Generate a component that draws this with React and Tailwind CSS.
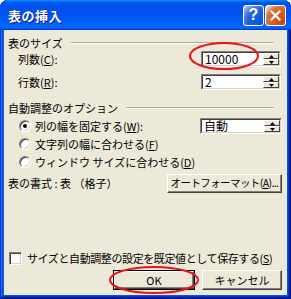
import React from "react";

const FONT = "font-['Noto_Sans_CJK_JP','Noto_Sans_CJK_SC',sans-serif]";

function SpinBtn({ up }) {
  return (
    <div className="flex flex-1 items-center justify-center border border-t-white border-l-white border-b-[#404040] border-r-[#404040] bg-[#ece9d8]">
      <svg width="5" height="3" viewBox="0 0 5 3">
        {up ? <path d="M2.5 0L5 3H0z" fill="#000" /> : <path d="M0 0H5L2.5 3z" fill="#000" />}
      </svg>
    </div>
  );
}

function SpinEdit({ value, w }) {
  return (
    <div className={`flex h-[16px] ${w} border border-t-[#808080] border-l-[#808080] border-b-white border-r-white`}>
      <div className="flex flex-1 border border-t-[#404040] border-l-[#404040] border-b-[#d4d0c8] border-r-[#d4d0c8]">
        <div className="flex flex-1 items-center bg-white pl-[2px] text-[12px] leading-none text-black">{value}</div>
        <div className="flex w-[16px] flex-col">
          <SpinBtn up />
          <SpinBtn />
        </div>
      </div>
    </div>
  );
}

function GroupLabel({ children }) {
  return (
    <div className="flex h-[14px] items-center">
      <span className="whitespace-nowrap text-[11px] leading-none text-black">{children}</span>
      <div className="ml-[8px] mr-[8px] flex-1 border-t border-b border-t-[#aca899] border-b-white" />
    </div>
  );
}

function Radio({ checked }) {
  return (
    <div className="flex h-[12px] w-[12px] items-center justify-center rounded-full border border-t-[#808080] border-l-[#808080] border-b-white border-r-white bg-white shadow-[inset_1px_1px_0_#404040,inset_-1px_-1px_0_#d4d0c8]">
      {checked && <div className="h-[4px] w-[4px] rounded-full bg-black" />}
    </div>
  );
}

function ClassicButton({ children, className = "" }) {
  return (
    <div className={`flex items-center justify-center whitespace-nowrap border border-t-white border-l-white border-b-[#404040] border-r-[#404040] bg-[#ece9d8] shadow-[inset_-1px_-1px_0_#808080] leading-none text-black ${className}`}>
      {children}
    </div>
  );
}

const U = ({ children }) => <span className="underline underline-offset-[1px]">{children}</span>;

export default function App() {
  return (
    <div className={`relative h-[299px] w-[291px] bg-white ${FONT}`}>
      <div className="flex h-[299px] w-[291px] flex-col rounded-t-[8px] bg-[#0855dd] shadow-[inset_-1px_-1px_#00138c,inset_1px_1px_#0831d9,inset_-2px_-2px_#001ea0,inset_2px_2px_#166aee,inset_-3px_-3px_#003bda,inset_3px_3px_#0855dd]">
        {/* Title bar */}
        <div className="flex h-[30px] items-center rounded-t-[8px] bg-[linear-gradient(180deg,#0997ff,#0053ee_8%,#0050ee_40%,#0066ff_88%,#0066ff_93%,#005bff_95%,#003dd7_96%,#003dd7)] pl-[8px] pr-[5px]">
          <span className="text-[13px] font-bold leading-none tracking-[0.5px] text-white [text-shadow:1px_1px_0_#0f1089]">表の挿入</span>
          <div className="ml-auto flex gap-[1px]">
            <div className="flex h-[21px] w-[21px] items-center justify-center rounded-[3px] border border-white bg-[radial-gradient(circle_at_90%_90%,#0054e9_0%,#2263d5_55%,#4479e4_70%,#a3bbec_90%,#ffffff_100%)]">
              <span className="font-['Liberation_Sans',sans-serif] text-[16px] font-bold leading-none text-white">?</span>
            </div>
            <div className="flex h-[21px] w-[21px] items-center justify-center rounded-[3px] border border-white bg-[radial-gradient(circle_at_90%_90%,#cc4600_0%,#dc6527_55%,#cd7546_70%,#ffccb2_90%,#ffffff_100%)]">
              <svg width="11" height="11" viewBox="0 0 11 11">
                <path d="M1.5 1.5L9.5 9.5M9.5 1.5L1.5 9.5" stroke="#fff" strokeWidth="2.2" strokeLinecap="square" />
              </svg>
            </div>
          </div>
        </div>

        {/* Client area */}
        <div className="mx-[4px] flex h-[265px] flex-col bg-[#ece9d8] pl-[4px] pr-[5px] pt-[6px] text-[11px] leading-none text-black">
          <GroupLabel>表のサイズ</GroupLabel>
          <div className="mt-[1px] flex h-[16px] items-center">
            <span className="ml-[10px]">列数(<U>C</U>):</span>
            <div className="ml-auto mr-[1px]">
              <SpinEdit value="10000" w="w-[80px]" />
            </div>
          </div>
          <div className="mt-[7px] flex h-[16px] items-center">
            <span className="ml-[10px]">行数(<U>R</U>):</span>
            <div className="ml-auto mr-[1px]">
              <SpinEdit value="2" w="w-[80px]" />
            </div>
          </div>

          <div className="mt-[11px]">
            <GroupLabel>自動調整のオプション</GroupLabel>
          </div>
          <div className="mt-[2px] flex h-[18px] items-center">
            <div className="ml-[11px]"><Radio checked /></div>
            <span className="ml-[4px]">列の幅を固定する(<U>W</U>):</span>
            <div className="ml-auto">
              <SpinEdit value="自動" w="w-[82px]" />
            </div>
          </div>
          <div className="flex h-[18px] items-center">
            <div className="ml-[11px]"><Radio /></div>
            <span className="ml-[4px]">文字列の幅に合わせる(<U>F</U>)</span>
          </div>
          <div className="flex h-[18px] items-center">
            <div className="ml-[11px]"><Radio /></div>
            <span className="ml-[4px]">ウィンドウ サイズに合わせる(<U>D</U>)</span>
          </div>

          <div className="mt-[3px] flex h-[19px] items-center">
            <span className="whitespace-nowrap">表の書式 : 表 （格子）</span>
            <ClassicButton className="ml-auto h-[19px] w-[115px] text-[10.5px] tracking-[-0.6px]">
              オートフォーマット(<U>A</U>)...
            </ClassicButton>
          </div>

          <div className="mt-[59px] flex h-[13px] items-center">
            <div className="ml-[1px] h-[13px] w-[13px] border border-t-[#808080] border-l-[#808080] border-b-white border-r-white bg-white shadow-[inset_1px_1px_0_#404040,inset_-1px_-1px_0_#d4d0c8]" />
            <span className="ml-[5px] whitespace-nowrap tracking-[-0.4px]">サイズと自動調整の設定を既定値として保存する(<U>S</U>)</span>
          </div>

          <div className="mt-[5px] flex h-[20px] items-center justify-end">
            <div className="h-[20px] w-[82px] border border-black">
              <ClassicButton className="h-full w-full text-[11px]">OK</ClassicButton>
            </div>
            <ClassicButton className="ml-[7px] h-[20px] w-[80px] text-[11px]">キャンセル</ClassicButton>
          </div>
        </div>
      </div>

      {/* Red annotation ellipses */}
      <svg className="pointer-events-none absolute left-0 top-0" width="291" height="299">
        <ellipse cx="224" cy="56" rx="34" ry="13" fill="none" stroke="#e8141a" strokeWidth="2" />
        <ellipse cx="154" cy="280" rx="44" ry="13" fill="none" stroke="#e8141a" strokeWidth="2" />
      </svg>
    </div>
  );
}
